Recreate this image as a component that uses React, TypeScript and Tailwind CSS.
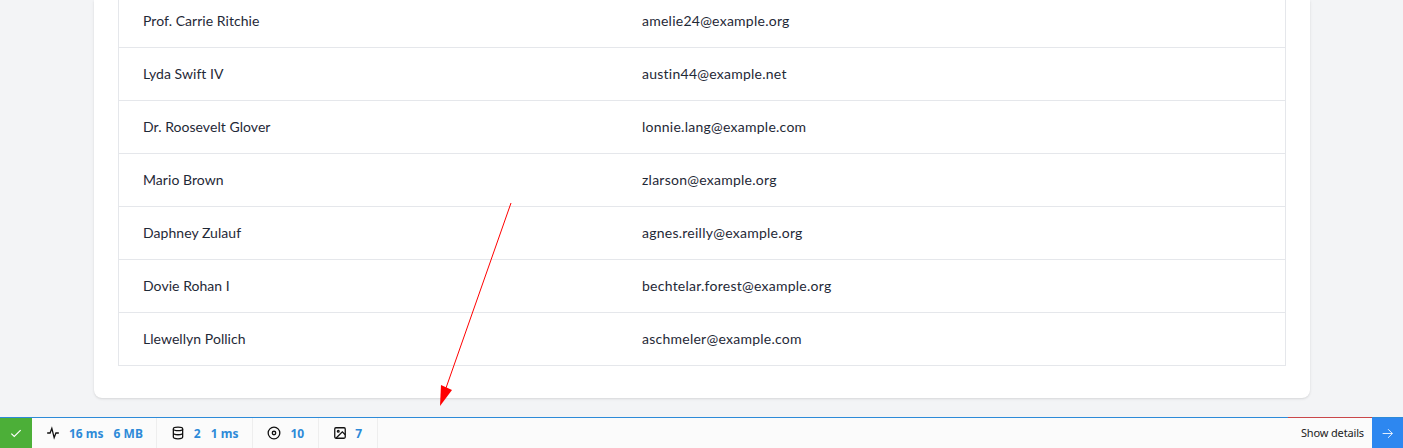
import React from "react";

const rows = [
  ["Prof. Carrie Ritchie", "amelie24@example.org"],
  ["Lyda Swift IV", "austin44@example.net"],
  ["Dr. Roosevelt Glover", "lonnie.lang@example.com"],
  ["Mario Brown", "zlarson@example.org"],
  ["Daphney Zulauf", "agnes.reilly@example.org"],
  ["Dovie Rohan I", "bechtelar.forest@example.org"],
  ["Llewellyn Pollich", "aschmeler@example.com"],
];

function Item({ icon, children, cls }: { icon: React.ReactNode; children: React.ReactNode; cls: string }) {
  return (
    <div className={"flex h-full items-center border-r border-[#eeeeee] pl-[14px] " + cls}>
      {icon}
      <div className="flex gap-[10px] pt-[1px] text-[12px] font-bold text-[#2d8ad8]">{children}</div>
    </div>
  );
}

const ic = "h-[14px] w-[14px] fill-none stroke-[#111] stroke-[2.2]";

export default function App() {
  return (
    <div className="relative h-[448px] w-[1403px] overflow-hidden bg-[#f3f4f6] font-['Lato','Noto_Sans',sans-serif]">
      <div className="ml-[94px] h-[398px] w-[1216px] rounded-b-lg bg-white px-6 shadow-sm">
        <div className="border-x border-b border-[#e5e7eb]">
          {rows.map(([n, e]) => (
            <div key={n} className="flex h-[53px] items-center border-b border-[#e5e7eb] pb-[1px] text-[14px] text-[#1f2937] first:h-[48px] first:pb-[6px] last:h-[52px] last:border-b-0">
              <div className="w-[523px] pl-6 tracking-[0.05px]">{n}</div>
              <div className="tracking-[0.25px]">{e}</div>
            </div>
          ))}
        </div>
      </div>

      <svg className="absolute left-[430px] top-[195px] h-[220px] w-[90px]" viewBox="0 0 90 220">
        <line x1="81" y1="8" x2="16" y2="193" stroke="#ff0000" strokeWidth="1" />
        <polygon points="10,211 11,190 22,195" fill="#ff0000" />
      </svg>

      <div className="absolute bottom-0 left-0 flex h-[31px] w-full items-center border-t border-[#2d8ad8] bg-[#fbfbfb] font-['Noto_Sans',sans-serif]">
        <div className="flex h-full w-[32px] items-center justify-center bg-[#4caf38]">
          <svg viewBox="0 0 24 24" className="h-[14px] w-[14px] fill-none stroke-white stroke-2"><path d="M4 13l5 5L20 7" /></svg>
        </div>
        <Item cls="gap-[9px] pr-[13px]" icon={<svg viewBox="0 0 24 24" className={ic}><path d="M2 12h5l3 -8l4 16l3 -8h5" /></svg>}>
          <span>16 ms</span><span>6 MB</span>
        </Item>
        <Item cls="gap-[9px] pr-[14px]" icon={<svg viewBox="0 0 24 24" className={ic}><ellipse cx="12" cy="5" rx="8" ry="3" /><path d="M4 5v14c0 1.7 3.6 3 8 3s8-1.3 8-3V5M4 12c0 1.7 3.6 3 8 3s8-1.3 8-3" /></svg>}>
          <span>2</span><span>1 ms</span>
        </Item>
        <Item cls="gap-[9px] pr-[14px]" icon={<svg viewBox="0 0 24 24" className={ic}><circle cx="12" cy="12" r="10" /><circle cx="12" cy="12" r="3" /></svg>}>
          <span>10</span>
        </Item>
        <Item cls="gap-[8px] pr-[15px]" icon={<svg viewBox="0 0 24 24" className={ic}><rect x="3" y="3" width="18" height="18" rx="2" /><circle cx="9" cy="9" r="1.5" /><path d="M21 15l-5-5L5 21" /></svg>}>
          <span>7</span>
        </Item>
        <div className="ml-auto pr-[8px] text-[11px] tracking-[-0.15px] text-[#222]">Show details</div>
        <div className="flex h-full w-[31px] items-center justify-center bg-[#2d87f0]">
          <svg viewBox="0 0 24 24" className="h-[13px] w-[13px] fill-none stroke-white stroke-[1.6]"><path d="M3 12h18M13 4l8 8-8 8" /></svg>
        </div>
        <div className="absolute left-[1288px] top-[-1px] h-px w-[84px] bg-[#c9474a]" />
      </div>
    </div>
  );
}
